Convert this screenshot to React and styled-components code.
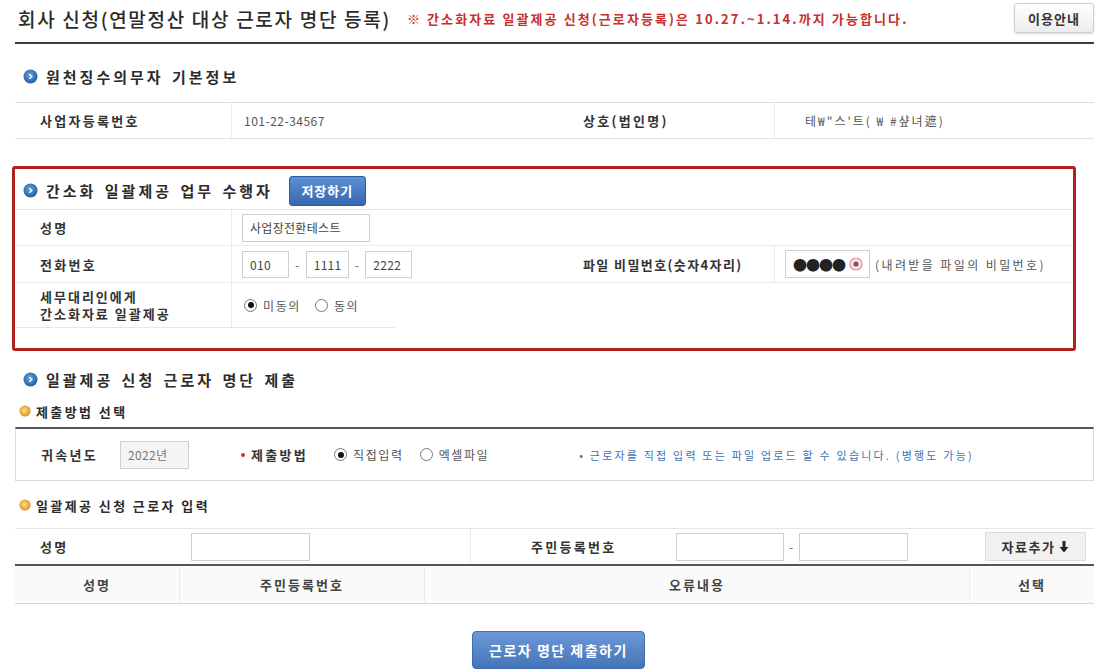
import React from "react";
import styled, { createGlobalStyle } from "styled-components";

const GlobalStyle = createGlobalStyle`
  html, body { margin: 0; padding: 0; background: #fff; }
  body { font-family: "Noto Sans CJK KR", "Noto Sans", sans-serif; color: #333; }
  * { box-sizing: border-box; }
`;

const Page = styled.div`
  width: 1109px;
  padding: 0 15px 0 15px;
`;

const Header = styled.div`
  height: 44px;
  display: flex;
  align-items: center;
  border-bottom: 2px solid #3e3e3e;
  padding: 0 0 6px 3px;
`;

const Title = styled.h1`
  margin: 0;
  font-size: 19px;
  font-weight: 500;
  letter-spacing: 1.7px;
  color: #2b2b2b;
`;

const Notice = styled.span`
  margin-left: 16px;
  font-size: 13px;
  font-weight: 700;
  color: #c9302c;
  letter-spacing: 2.1px;
`;

const GuideButton = styled.button`
  margin-left: auto;
  width: 80px;
  height: 30px;
  border: 1px solid #cfcfcf;
  border-radius: 3px;
  background: linear-gradient(#ffffff, #ececec);
  box-shadow: 0 1px 2px rgba(0,0,0,0.15);
  font-family: inherit;
  font-size: 13px;
  font-weight: 700;
  color: #333;
  letter-spacing: 1px;
`;

const SectionTitle = styled.div`
  display: flex;
  align-items: center;
  gap: 8px;
  height: ${p => p.$h || 30}px;
  margin-top: ${p => p.$mt || 0}px;
  padding-left: 8px;
  font-size: 15px;
  font-weight: 700;
  letter-spacing: 3px;
  word-spacing: 2px;
  color: #2c2c2c;
`;

const SubTitle = styled.div`
  display: flex;
  align-items: center;
  gap: 5px;
  height: 24px;
  margin-top: ${p => p.$mt || 0}px;
  padding-left: 4px;
  font-size: 13px;
  font-weight: 700;
  letter-spacing: 2.4px;
  color: #2c2c2c;
`;

const BlueDot = () => (
  <svg width="15" height="15" viewBox="0 0 15 15">
    <defs>
      <radialGradient id="bd" cx="0.45" cy="0.4" r="0.6">
        <stop offset="0" stopColor="#6aa6e0" />
        <stop offset="1" stopColor="#1f5c9e" />
      </radialGradient>
    </defs>
    <circle cx="7.5" cy="7.5" r="7" fill="url(#bd)" />
    <path d="M6.3 5.2 L8.8 7.5 L6.3 9.8" fill="none" stroke="#fff" strokeWidth="1.4" />
  </svg>
);

const OrangeDot = () => (
  <svg width="12" height="12" viewBox="0 0 12 12">
    <defs>
      <radialGradient id="od" cx="0.45" cy="0.45" r="0.6">
        <stop offset="0" stopColor="#fbe08a" />
        <stop offset="1" stopColor="#e08a16" />
      </radialGradient>
    </defs>
    <circle cx="6" cy="6" r="5.6" fill="url(#od)" />
  </svg>
);

const Grid = styled.div`
  display: grid;
  grid-template-columns: ${p => p.$cols};
  width: ${p => (p.$w ? `${p.$w}px` : "auto")};
  min-height: ${p => p.$h}px;
  margin-top: ${p => p.$mt || 0}px;
  border-top: ${p => p.$top || "1px solid #e2e2e2"};
  border-bottom: ${p => p.$bottom || "1px solid #e2e2e2"};
  background: ${p => p.$bg || "transparent"};
`;

const Label = styled.div`
  display: flex;
  align-items: center;
  padding-left: ${p => p.$pl ?? 25}px;
  font-size: 13px;
  font-weight: 700;
  letter-spacing: ${p => p.$ls ?? 2.3}px;
  line-height: 17px;
  color: #333;
  border-right: ${p => (p.$line ? "1px solid #ececec" : "none")};
`;

const Value = styled.div`
  display: flex;
  align-items: center;
  gap: ${p => p.$gap ?? 8}px;
  padding-left: ${p => p.$pl ?? 12}px;
  font-size: 12px;
  color: #555;
  letter-spacing: ${p => p.$ls ?? 0.5}px;
  border-right: ${p => (p.$line ? "1px solid #ececec" : "none")};
`;

const Cell = styled.div`
  display: flex;
  align-items: center;
  justify-content: center;
  font-size: 13px;
  font-weight: 700;
  letter-spacing: 2px;
  color: #444;
  border-right: ${p => (p.$line ? "1px solid #ececec" : "none")};
`;

const Highlight = styled.div`
  margin: 27px 18px 0 -3px;
  height: 185px;
  border: 3px solid #b1221e;
  border-radius: 3px;
`;

const SaveButton = styled.button`
  margin-left: 8px;
  width: 77px;
  height: 30px;
  border: 1px solid #2f5a9a;
  border-radius: 3px;
  background: linear-gradient(#5d8fd3, #3568b0);
  color: #fff;
  font-family: inherit;
  font-size: 13px;
  font-weight: 700;
  letter-spacing: 1px;
`;

const TextBox = styled.div`
  display: flex;
  align-items: center;
  width: ${p => p.$w}px;
  height: ${p => p.$h || 28}px;
  padding-left: 7px;
  border: 1px solid #cfcfcf;
  background: ${p => p.$bg || "#fff"};
  font-size: 12px;
  color: ${p => p.$color || "#444"};
  letter-spacing: 0.3px;
`;

const Dash = styled.span`
  color: #666;
  font-size: 12px;
`;

const Hint = styled.span`
  font-size: 12px;
  color: #555;
  letter-spacing: 2.4px;
`;

const Dots = styled.span`
  font-size: 14px;
  color: #222;
  letter-spacing: -1px;
`;

const RadioItem = styled.label`
  display: inline-flex;
  align-items: center;
  gap: 6px;
  font-size: 12px;
  color: #555;
  letter-spacing: 1.6px;
  margin-right: ${p => p.$mr ?? 8}px;
`;

const RadioMark = styled.span`
  width: 13px;
  height: 13px;
  border-radius: 50%;
  border: 1px solid #777;
  background: #fff;
  display: inline-flex;
  align-items: center;
  justify-content: center;
  &::after {
    content: "";
    width: 6px;
    height: 6px;
    border-radius: 50%;
    background: ${p => (p.$on ? "#111" : "transparent")};
  }
`;

const Radio = ({ on, children, mr }) => (
  <RadioItem $mr={mr}>
    <RadioMark $on={on} />
    {children}
  </RadioItem>
);

const MethodBox = styled.div`
  margin-top: 4px;
  height: 54px;
  display: flex;
  align-items: center;
  padding-left: 25px;
  border: 1px solid #d8d8d8;
  border-top: 2px solid #555;
`;

const MethodLabel = styled.span`
  font-size: 13px;
  font-weight: 700;
  letter-spacing: 2.3px;
  color: #333;
  margin-right: ${p => p.$mr}px;
`;

const RedDot = styled.span`
  width: 4px;
  height: 4px;
  border-radius: 50%;
  background: #d0302c;
  margin: 0 6px 0 52px;
`;

const Note = styled.span`
  margin-left: 82px;
  font-size: 11px;
  color: #3f72b5;
  letter-spacing: 2.2px;
`;

const AddButton = styled.button`
  margin-left: auto;
  margin-right: 8px;
  width: 101px;
  height: 29px;
  border: 1px solid #dcdcdc;
  background: #f1f1f1;
  display: flex;
  align-items: center;
  justify-content: center;
  gap: 4px;
  font-family: inherit;
  font-size: 13px;
  font-weight: 700;
  letter-spacing: 1.5px;
  color: #333;
`;

const Footer = styled.div`
  display: flex;
  justify-content: center;
  padding: 27px 0 0 8px;
`;

const SubmitButton = styled.button`
  width: 173px;
  height: 38px;
  border: 1px solid #3e6cae;
  border-radius: 4px;
  background: linear-gradient(#6c98d6, #4474b9);
  color: #fff;
  font-family: inherit;
  font-size: 14px;
  font-weight: 700;
  letter-spacing: 1.5px;
`;

const RrnLabel = styled.span`
  width: 140px;
  margin-left: 60px;
  font-size: 13px;
  font-weight: 700;
  letter-spacing: 2.3px;
  color: #333;
`;

const ArrowDown = () => (
  <svg width="10" height="12" viewBox="0 0 10 12">
    <path d="M3.5 0 H6.5 V6 H9.5 L5 11.5 L0.5 6 H3.5 Z" fill="#222" />
  </svg>
);

const EyeMark = () => (
  <svg width="14" height="14" viewBox="0 0 14 14">
    <circle cx="7" cy="7" r="6" fill="#fbe3e6" stroke="#e48b98" strokeWidth="1.2" />
    <circle cx="7" cy="7" r="2.6" fill="#7b5a60" />
  </svg>
);

const Spacer = styled.span`
  width: 4px;
`;

export default function App() {
  return (
    <Page>
      <GlobalStyle />
      <Header>
        <Title>회사 신청(연말정산 대상 근로자 명단 등록)</Title>
        <Notice>※ 간소화자료 일괄제공 신청(근로자등록)은 10.27.~1.14.까지 가능합니다.</Notice>
        <GuideButton>이용안내</GuideButton>
      </Header>

      <SectionTitle $mt={17}>
        <BlueDot />
        원천징수의무자 기본정보
      </SectionTitle>
      <Grid $cols="217px 328px 215px 1fr" $h={37} $top="1px solid #dedede" $mt={11}>
        <Label $line>사업자등록번호</Label>
        <Value>101-22-34567</Value>
        <Label $line $pl={23}>상호(법인명)</Label>
        <Value $pl={30} $ls={2}>테₩"스'트( ₩ #샾녀遮)</Value>
      </Grid>

      <Highlight>
        <SectionTitle $h={35} $mt={4}>
          <BlueDot />
          간소화 일괄제공 업무 수행자
          <SaveButton>저장하기</SaveButton>
        </SectionTitle>
        <Grid $cols="217px 1fr" $h={37} $top="1px solid #e6e6e6" $bottom="1px solid #ececec" $mt={1}>
          <Label $line>성명</Label>
          <Value $pl={10}>
            <TextBox $w={128}>사업장전환테스트</TextBox>
          </Value>
        </Grid>
        <Grid $cols="217px 328px 215px 1fr" $h={37} $top="none" $bottom="1px solid #ececec">
          <Label $line>전화번호</Label>
          <Value $pl={10} $gap={6}>
            <TextBox $w={47} $h={27}>010</TextBox>
            <Dash>-</Dash>
            <TextBox $w={43} $h={27}>1111</TextBox>
            <Dash>-</Dash>
            <TextBox $w={47} $h={27}>2222</TextBox>
          </Value>
          <Label $line $pl={23} $ls={1.4}>파일 비밀번호(숫자4자리)</Label>
          <Value $pl={10} $gap={5}>
            <TextBox $w={85} $h={28}>
              <Dots>●●●●</Dots>
              <Spacer />
              <EyeMark />
            </TextBox>
            <Hint>(내려받을 파일의 비밀번호)</Hint>
          </Value>
        </Grid>
        <Grid $cols="217px 1fr" $w={380} $h={45} $top="none" $bottom="1px solid #e6e6e6">
          <Label $line $ls={2}>
            세무대리인에게
            <br />
            간소화자료 일괄제공
          </Label>
          <Value $pl={12}>
            <Radio on mr={6}>미동의</Radio>
            <Radio>동의</Radio>
          </Value>
        </Grid>
      </Highlight>

      <SectionTitle $mt={13}>
        <BlueDot />
        일괄제공 신청 근로자 명단 제출
      </SectionTitle>
      <SubTitle $mt={5}>
        <OrangeDot />
        제출방법 선택
      </SubTitle>
      <MethodBox>
        <MethodLabel $mr={22}>귀속년도</MethodLabel>
        <TextBox $w={69} $bg="#f4f4f4" $color="#777">2022년</TextBox>
        <RedDot />
        <MethodLabel $mr={26}>제출방법</MethodLabel>
        <Radio on mr={16}>직접입력</Radio>
        <Radio>엑셀파일</Radio>
        <Note>• 근로자를 직접 입력 또는 파일 업로드 할 수 있습니다. (병행도 가능)</Note>
      </MethodBox>

      <SubTitle $mt={12}>
        <OrangeDot />
        일괄제공 신청 근로자 입력
      </SubTitle>
      <Grid $cols="176px 280px 1fr" $h={38} $top="1px solid #e6e6e6" $bottom="2px solid #555" $mt={11}>
        <Label>성명</Label>
        <Value $line $pl={0}>
          <TextBox $w={119} $h={28} />
        </Value>
        <Value $pl={0} $gap={5}>
          <RrnLabel>주민등록번호</RrnLabel>
          <TextBox $w={108} $h={28} />
          <Dash>-</Dash>
          <TextBox $w={109} $h={28} />
          <AddButton>
            자료추가 <ArrowDown />
          </AddButton>
        </Value>
      </Grid>
      <Grid $cols="165px 245px 545px 1fr" $h={38} $top="none" $bottom="1px solid #d9d9d9" $bg="#fafafa">
        <Cell $line>성명</Cell>
        <Cell $line>주민등록번호</Cell>
        <Cell $line>오류내용</Cell>
        <Cell>선택</Cell>
      </Grid>

      <Footer>
        <SubmitButton>근로자 명단 제출하기</SubmitButton>
      </Footer>
    </Page>
  );
}
